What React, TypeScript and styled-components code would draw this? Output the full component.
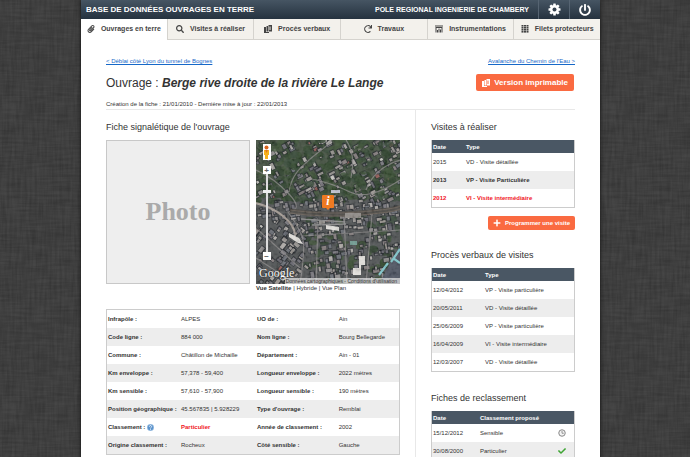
import React from "react";
import styled, { createGlobalStyle, css } from "styled-components";
import { FaCheck, FaPaperclip, FaPlus, FaPowerOff, FaRedo, FaSearch } from "react-icons/fa";

const linen = encodeURIComponent(
  `<svg xmlns="http://www.w3.org/2000/svg" width="300" height="300">
    <filter id="h" x="0" y="0" width="100%" height="100%"><feTurbulence type="fractalNoise" baseFrequency="0.04 0.4" numOctaves="2" seed="4" stitchTiles="stitch"/><feColorMatrix values="0 0 0 0 0  0 0 0 0 0  0 0 0 0 0  1.4 0 0 0 -0.4"/></filter>
    <filter id="v" x="0" y="0" width="100%" height="100%"><feTurbulence type="fractalNoise" baseFrequency="0.4 0.04" numOctaves="2" seed="9" stitchTiles="stitch"/><feColorMatrix values="0 0 0 0 0  0 0 0 0 0  0 0 0 0 0  1.4 0 0 0 -0.4"/></filter>
    <rect width="300" height="300" fill="#464646"/>
    <rect width="300" height="300" filter="url(#h)" opacity="0.18"/>
    <rect width="300" height="300" filter="url(#v)" opacity="0.18"/>
  </svg>`
);

const GlobalStyle = createGlobalStyle`
  *, *::before, *::after { box-sizing: border-box; }
  html { scrollbar-width: none; }
  body {
    margin: 0;
    background: #444 url("data:image/svg+xml,${linen}");
    font-family: "Liberation Sans", Arial, sans-serif;
    font-size: 6px;
    line-height: 8px;
    color: #333;
  }
  button { font-family: inherit; padding: 0; border: 0; cursor: pointer; }
  h1, h2, p { margin: 0; font-weight: normal; }
`;

const Shell = styled.div`
  padding: 0 90px 0 81px;
`;

const Page = styled.div`
  min-height: 100vh;
  background: #fff;
  box-shadow: 0 0 4px #111;
`;

const Header = styled.header`
  display: flex;
  align-items: center;
  height: 19px;
  padding-left: 5px;
  color: #fff;
  font-weight: bold;
  background: linear-gradient(#465563, #25323f);
`;

const Brand = styled.div`
  flex: 1;
  font-size: 8px;
  white-space: nowrap;
`;

const Unit = styled.div`
  margin-right: 9px;
  font-size: 7px;
  white-space: nowrap;
`;

const HeaderButton = styled.button`
  display: flex;
  align-items: center;
  justify-content: center;
  width: 31px;
  height: 19px;
  color: #fff;
  font-size: 12px;
  background: none;
  border-left: 1px solid #566472;
`;

const Nav = styled.nav`
  display: flex;
  height: 21px;
`;

const Tab = styled.a<{ $active?: boolean }>`
  display: flex;
  flex: 1;
  align-items: center;
  justify-content: center;
  gap: 6px;
  font-size: 7px;
  font-weight: bold;
  color: #444;
  text-decoration: none;
  white-space: nowrap;
  background: #f3f1ec;
  border-bottom: 1px solid #d5d3ce;
  & + & { border-left: 1px solid #d5d3ce; }
  svg { width: 8px; height: 8px; flex: none; }
  ${(p) => p.$active && css`
    background: #fff;
    border-bottom-color: #fff;
  `}
`;

const Main = styled.main`
  padding: 17px 25px 0;
`;

const Siblings = styled.div`
  display: flex;
  justify-content: space-between;
`;

const TextLink = styled.a`
  color: #1668c8;
`;

const TitleRow = styled.div`
  display: flex;
  align-items: center;
  justify-content: space-between;
  height: 17px;
  margin-top: 9px;
  padding-right: 1px;
`;

const Title = styled.h1`
  font-size: 12px;
  line-height: 16px;
  white-space: nowrap;
`;

const ActionButton = styled.button<{ $small?: boolean }>`
  display: flex;
  align-items: center;
  justify-content: center;
  gap: 4px;
  height: ${(p) => (p.$small ? 14 : 17)}px;
  padding: 0 ${(p) => (p.$small ? 5 : 6)}px;
  border-radius: 2px;
  color: #fff;
  font-size: ${(p) => (p.$small ? 6 : 8)}px;
  font-weight: bold;
  white-space: nowrap;
  background: #fa6a41;
  svg { width: 8px; height: 8px; flex: none; }
`;

const Meta = styled.p`
  margin-top: 9px;
  padding-bottom: 1px;
  border-bottom: 1px solid #e8e8e8;
`;

const Columns = styled.div`
  display: grid;
  grid-template-columns: minmax(0, 1fr) 160px;
`;

const Primary = styled.section`
  padding: 12px 15px 0 0;
`;

const Aside = styled.aside`
  padding: 12px 0 0 15px;
  border-left: 1px solid #e8e8e8;
`;

const Heading = styled.h2`
  font-size: 9px;
  line-height: 11px;
  margin-bottom: 7px;
`;

const Media = styled.div`
  display: flex;
  justify-content: space-between;
  gap: 5px;
`;

const Photo = styled.div`
  display: flex;
  align-items: center;
  justify-content: center;
  width: 144px;
  height: 144px;
  border: 1px solid #c8c8c8;
  background: #eee;
  color: #aaa;
  font: bold 26px "Liberation Serif", serif;
`;

const MapColumn = styled.div`
  width: 144px;
`;

const MapFrame = styled.div`
  position: relative;
  height: 144px;
  overflow: hidden;
  svg { display: block; }
`;

const Attribution = styled.div`
  position: absolute;
  right: 0;
  bottom: 0;
  padding: 0 3px 0 1px;
  font-size: 5px;
  line-height: 6px;
  color: #333;
  white-space: nowrap;
  background: rgba(225, 225, 225, 0.75);
`;

const MapLogo = styled.div`
  position: absolute;
  left: 3px;
  bottom: 6px;
  color: #fff;
  font: 12px/10px "Liberation Serif", serif;
  text-shadow: 0 0 1px #000;
`;

const MapTools = styled.div`
  position: absolute;
  left: 6px;
  top: 4px;
  display: flex;
  flex-direction: column;
  align-items: center;
  width: 9px;
`;

const Pegman = styled.button`
  display: flex;
  justify-content: center;
  width: 8px;
  height: 16px;
  margin-bottom: 6px;
  background: #fff;
`;

const ZoomButton = styled.button`
  width: 8px;
  height: 8px;
  font-size: 8px;
  line-height: 7px;
  font-weight: bold;
  color: #666;
  background: #fff;
`;

const ZoomTrack = styled.div`
  display: flex;
  justify-content: center;
  width: 2px;
  height: 78px;
  padding-top: 16px;
  background: #ddd;
`;

const ZoomThumb = styled.div`
  flex: none;
  width: 8px;
  height: 3px;
  background: #eee;
`;

const Marker = styled.div`
  position: absolute;
  left: 66px;
  top: 55px;
`;

const MarkerBox = styled.div`
  width: 12px;
  height: 13px;
  border-radius: 1px;
  color: #fff;
  text-align: center;
  font: italic bold 12px/13px "Liberation Serif", serif;
  background: #ee7a22;
  &::after {
    content: "";
    display: block;
    width: 4px;
    margin: 0 auto;
    border: 2px solid transparent;
    border-top-color: #ee7a22;
  }
`;

const MapModes = styled.div`
  white-space: nowrap;
  a { color: inherit; text-decoration: none; }
`;

const Frame = styled.div<{ $gap?: number; $noHead?: boolean }>`
  margin-bottom: ${(p) => p.$gap ?? 0}px;
  border: 1px solid #ccc;
  ${(p) => !p.$noHead && css`border-top: 0;`}
`;

const Table = styled.table`
  width: 100%;
  table-layout: fixed;
  border-collapse: collapse;
  text-align: left;
  white-space: nowrap;
  td, th { padding: 0 0 0 1px; }
  td { height: 18px; }
  tbody tr:nth-child(even) { background: #ededed; }
  tbody th { font-weight: bold; }
  thead th { height: 13px; color: #fff; background: #4a5764; }
  svg { vertical-align: middle; }
`;

const Row = styled.tr<{ $bold?: boolean; $alert?: boolean }>`
  font-weight: ${(p) => (p.$bold ? "bold" : "normal")};
  color: ${(p) => (p.$alert ? "#f0141e" : "inherit")};
`;

const Col = styled.col<{ $w: string }>`
  width: ${(p) => p.$w};
`;

const Alert = styled.b`
  color: #f0141e;
`;

const SheetTable = styled.div`
  margin-top: 17px;
`;

const ButtonRow = styled.div`
  display: flex;
  justify-content: flex-end;
  margin: 8px 0 20px;
`;

const GearIcon = () => (
  <svg width="13" height="13" viewBox="-13 -13 26 26" fill="currentColor" aria-hidden="true">
    {[0, 45, 90, 135].map((a) => (
      <rect key={a} x="-2.6" y="-12" width="5.2" height="24" rx="1" transform={`rotate(${a})`} />
    ))}
    <circle r="9" />
    <circle r="4" fill="#35424f" />
  </svg>
);

const SheetsIcon = () => (
  <svg viewBox="0 0 16 16" fill="currentColor" aria-hidden="true">
    <path d="M0 4h4v10h6v2H0z" />
    <path d="M5 2h3v11H5z" />
    <path fillRule="evenodd" d="M9 0h7v13H9zM11 3v7h1V3zm2 0v7h1V3z" />
  </svg>
);

const ChartIcon = () => (
  <svg viewBox="0 0 16 16" fill="currentColor" aria-hidden="true">
    <path d="M0 1h16v2H0z" />
    <path d="M1 4h14v11h-2V6H3v9H1z" />
    <path d="M4 10h2v5H4zM7 7h2v8H7zM10 9h2v6h-2z" />
  </svg>
);

const GridIcon = () => (
  <svg viewBox="0 0 16 16" fill="currentColor" aria-hidden="true">
    {[0, 4, 8, 12].map((y) => [1, 6, 11].map((x) => (
      <rect key={`${x}-${y}`} x={x} y={y} width="4" height="3.2" />
    )))}
  </svg>
);

const ClockIcon = () => (
  <svg width="8" height="8" viewBox="0 0 16 16" role="img" aria-label="En attente">
    <circle cx="8" cy="8" r="6.5" fill="#f3f3f3" stroke="#888" strokeWidth="2" />
    <path d="M8 4v4.5h3.5" fill="none" stroke="#777" strokeWidth="1.5" />
  </svg>
);

const HelpIcon = () => (
  <svg width="7" height="7" viewBox="0 0 14 14" role="img" aria-label="Aide">
    <circle cx="7" cy="7" r="6.5" fill="#5b93cc" stroke="#a9c8e6" />
    <path d="M4.8 5.3a2.2 2.2 0 1 1 3.2 2q-1 .5-1 1.5M7 10v1.6" fill="none" stroke="#fff" strokeWidth="1.6" />
  </svg>
);

const PegmanIcon = () => (
  <svg width="7" height="16" viewBox="0 0 7 16" aria-hidden="true">
    <circle cx="3.5" cy="3.5" r="2" fill="#d9641c" />
    <path d="M1 6h5v5H5v4H2v-4H1z" fill="#f7b21c" />
    <path d="M2 6h3L3.5 9z" fill="#e0781c" />
  </svg>
);

function seeded(seed: number) {
  let s = seed;
  return () => {
    s = (s * 16807) % 2147483647;
    return s / 2147483647;
  };
}

const roofs = ["#a19d9d", "#858389", "#a9a4a0", "#73727b", "#b3aca6", "#93898a", "#777a83", "#c4c0bb"];
const trees = ["#31472c", "#293d28", "#3c5134", "#354936"];

function buildCity() {
  const rnd = seeded(4711);
  const items: React.ReactNode[] = [];
  const tree = (key: string, i: number, x: number, y: number) => (
    <ellipse key={key} cx={x} cy={y} rx={1.5 + rnd() * 4} ry={1.5 + rnd() * 3} fill={trees[i % 4]} opacity="0.8" />
  );
  for (let i = 0; i < 260; i++) {
    items.push(tree(`t${i}`, i, rnd() * 144, rnd() * 62));
  }
  for (let i = 0; i < 90; i++) {
    items.push(tree(`s${i}`, i, 50 + rnd() * 94, 76 + rnd() * 68));
  }
  for (let i = 0; i < 560; i++) {
    const x = rnd() * 144;
    const y = rnd() * 144;
    const w = 1.5 + rnd() * 5;
    const h = 1.5 + rnd() * 2.5;
    const angle = (y > 80 && x < 50 ? 38 : y < 60 ? -28 : -8) + (rnd() > 0.6 ? 90 : 0);
    if (y < 60 && rnd() < 0.2) continue;
    const pick = rnd();
    const fill = pick > 0.98 ? "#e2dfd8" : pick > 0.96 ? "#a5645d" : roofs[i % roofs.length];
    items.push(
      <g key={`b${i}`} transform={`translate(${x.toFixed(1)} ${y.toFixed(1)}) rotate(${angle})`}>
        <rect x="-1" y="-1.2" width={w + 1.5} height={h + 1.8} fill="#202429" opacity="0.75" />
        <rect width={w} height={h} fill={fill} opacity="0.85" />
      </g>
    );
  }
  for (let i = 0; i < 50; i++) {
    items.push(tree(`u${i}`, i, rnd() * 144, rnd() * 60));
  }
  return items;
}

const city = buildCity();

const SatelliteMap = () => (
  <svg width="100%" height="144" viewBox="0 0 144 144" preserveAspectRatio="xMidYMid slice" role="img" aria-label="Vue satellite">
    <defs>
      <filter id="grain" x="0" y="0" width="100%" height="100%">
        <feTurbulence type="fractalNoise" baseFrequency="0.25" numOctaves="3" seed="12" />
        <feColorMatrix values="1.6 0 0 0 -0.4  1.6 0 0 0 -0.4  1.6 0 0 0 -0.4  0 0 0 0 1" />
      </filter>
    </defs>
    <rect width="144" height="144" fill="#505354" />
    <path d="M0 0h144v58L90 60 0 56z" fill="#435040" />
    {city}
    <g fill="none" stroke="#8e8b8b" strokeWidth="1.2" opacity="0.75">
      <path d="M33 52C35 36 44 28 53 20S70 8 76 0" />
      <path d="M0 30q18 8 33 24t-1 18q10 14 14 24t-2 48" />
      <path d="M52 38q24 5 42 14t50-12M90 0q10 14 5 38M110 50q8-22 34-30" />
      <path d="M46 96l98-6M88 74l3 70M62 82l-2 62M116 74l-6 70M0 88l44 40M0 118l40 26" />
    </g>
    <path d="M0 63q16 4 27 13t12 18" fill="none" stroke="#a39a93" strokeWidth="2.2" />
    <path d="M34 71q34 5 70 2t40-6" fill="none" stroke="#4a4844" strokeWidth="5" />
    <path d="M34 70q34 5 70 2t40-6M34 73q34 5 70 2t40-6" fill="none" stroke="#74695f" strokeWidth="0.7" />
    <path d="M45 79l44 3M56 85l34-1" stroke="#8b8b8b" strokeWidth="1.4" />
    <path d="M89 73h16v5H89z" fill="#918d89" />
    <path d="M70 85l13 2v4l-13-2zM33 93l10 5 4 6-5-1-9-6zM103 116h6v9h-4v10h-8v-7h6z" fill="#e3e1dd" />
    <path d="M75 50h9v3h-9z" fill="#c0c4d3" />
    <path d="M94 101h7v4h-7z" fill="#719c92" />
    <path d="M124 142l20-37v39z" fill="#4d5361" />
    <path d="M123 135l9-12M135 122l9-13M137 118l7 5" stroke="#83c9ce" strokeWidth="2.2" />
    <rect width="144" height="144" filter="url(#grain)" opacity="0.1" />
  </svg>
);

const sheet = [
  ["Infrapôle :", "ALPES", "UO de :", "Ain"],
  ["Code ligne :", "884 000", "Nom ligne :", "Bourg Bellegarde"],
  ["Commune :", "Châtillon de Michaille", "Département :", "Ain - 01"],
  ["Km enveloppe :", "57,378 - 59,400", "Longueur enveloppe :", "2022 mètres"],
  ["Km sensible :", "57,610 - 57,900", "Longueur sensible :", "190 mètres"],
  ["Position géographique :", "45.567835 | 5.928229", "Type d'ouvrage :", "Remblai"],
  ["Classement :", "Particulier", "Année de classement :", "2002"],
  ["Origine classement :", "Rocheux", "Côté sensible :", "Gauche"],
];

const reports = [
  ["12/04/2012", "VP - Visite particulière"],
  ["20/05/2011", "VD - Visite détaillée"],
  ["25/06/2009", "VP - Visite particulière"],
  ["16/04/2009", "VI - Visite intermédiaire"],
  ["12/03/2007", "VD - Visite détaillée"],
];

export default function App() {
  return (
    <Shell>
      <GlobalStyle />
      <Page>
        <Header>
          <Brand>BASE DE DONNÉES OUVRAGES EN TERRE</Brand>
          <Unit>POLE REGIONAL INGENIERIE DE CHAMBERY</Unit>
          <HeaderButton aria-label="Paramètres"><GearIcon /></HeaderButton>
          <HeaderButton aria-label="Déconnexion"><FaPowerOff /></HeaderButton>
        </Header>
        <Nav>
          <Tab href="#ouvrages" $active><FaPaperclip />Ouvrages en terre</Tab>
          <Tab href="#visites"><FaSearch />Visites à réaliser</Tab>
          <Tab href="#pv"><SheetsIcon />Procès verbaux</Tab>
          <Tab href="#travaux"><FaRedo />Travaux</Tab>
          <Tab href="#instrumentations"><ChartIcon />Instrumentations</Tab>
          <Tab href="#filets"><GridIcon />Filets protecteurs</Tab>
        </Nav>
        <Main>
          <Siblings>
            <TextLink href="#precedent">&lt; Déblai côté Lyon du tunnel de Bognes</TextLink>
            <TextLink href="#suivant">Avalanche du Chemin de l'Eau &gt;</TextLink>
          </Siblings>
          <TitleRow>
            <Title>Ouvrage : <b><i>Berge rive droite de la rivière Le Lange</i></b></Title>
            <ActionButton><SheetsIcon />Version imprimable</ActionButton>
          </TitleRow>
          <Meta>Création de la fiche : 21/01/2010 - Dernière mise à jour : 22/01/2013</Meta>
          <Columns>
            <Primary>
              <Heading>Fiche signalétique de l'ouvrage</Heading>
              <Media>
                <Photo>Photo</Photo>
                <MapColumn>
                  <MapFrame>
                    <SatelliteMap />
                    <MapTools>
                      <Pegman aria-label="Street View"><PegmanIcon /></Pegman>
                      <ZoomButton aria-label="Zoom avant">+</ZoomButton>
                      <ZoomTrack><ZoomThumb /></ZoomTrack>
                      <ZoomButton aria-label="Zoom arrière">−</ZoomButton>
                    </MapTools>
                    <Marker><MarkerBox>i</MarkerBox></Marker>
                    <MapLogo>Google</MapLogo>
                    <Attribution>Données cartographiques - Conditions d'utilisation</Attribution>
                  </MapFrame>
                  <MapModes>
                    <a href="#satellite"><b>Vue Satellite</b></a> | <a href="#hybride">Hybride</a> | <a href="#plan">Vue Plan</a>
                  </MapModes>
                </MapColumn>
              </Media>
              <SheetTable>
                <Frame $noHead>
                  <Table>
                    <colgroup><Col $w="25%" /><Col $w="26%" /><Col $w="28%" /><Col $w="21%" /></colgroup>
                    <tbody>
                      {sheet.map(([a, b, c, d]) => (
                        <tr key={a}>
                          <th scope="row">{a}{a === "Classement :" && <> <HelpIcon /></>}</th>
                          <td>{b === "Particulier" ? <Alert>{b}</Alert> : b}</td>
                          <th scope="row">{c}</th>
                          <td>{d}</td>
                        </tr>
                      ))}
                    </tbody>
                  </Table>
                </Frame>
              </SheetTable>
            </Primary>
            <Aside>
              <Heading>Visites à réaliser</Heading>
              <Frame>
                <Table>
                  <colgroup><Col $w="33px" /><Col $w="auto" /></colgroup>
                  <thead><tr><th>Date</th><th>Type</th></tr></thead>
                  <tbody>
                    <Row><td>2015</td><td>VD - Visite détaillée</td></Row>
                    <Row $bold><td>2013</td><td>VP - Visite Particulière</td></Row>
                    <Row $bold $alert><td>2012</td><td>VI - Visite intermédiaire</td></Row>
                  </tbody>
                </Table>
              </Frame>
              <ButtonRow>
                <ActionButton $small><FaPlus />Programmer une visite</ActionButton>
              </ButtonRow>
              <Heading>Procès verbaux de visites</Heading>
              <Frame $gap={21}>
                <Table>
                  <colgroup><Col $w="52px" /><Col $w="auto" /></colgroup>
                  <thead><tr><th>Date</th><th>Type</th></tr></thead>
                  <tbody>
                    {reports.map(([date, type]) => <tr key={date}><td>{date}</td><td>{type}</td></tr>)}
                  </tbody>
                </Table>
              </Frame>
              <Heading>Fiches de reclassement</Heading>
              <Frame>
                <Table>
                  <colgroup><Col $w="47px" /><Col $w="auto" /><Col $w="17px" /></colgroup>
                  <thead><tr><th>Date</th><th colSpan={2}>Classement proposé</th></tr></thead>
                  <tbody>
                    <tr><td>15/12/2012</td><td>Sensible</td><td><ClockIcon /></td></tr>
                    <tr><td>30/08/2000</td><td>Particulier</td><td><FaCheck size={8} color="#3fa535" title="Validé" /></td></tr>
                  </tbody>
                </Table>
              </Frame>
            </Aside>
          </Columns>
        </Main>
      </Page>
    </Shell>
  );
}
